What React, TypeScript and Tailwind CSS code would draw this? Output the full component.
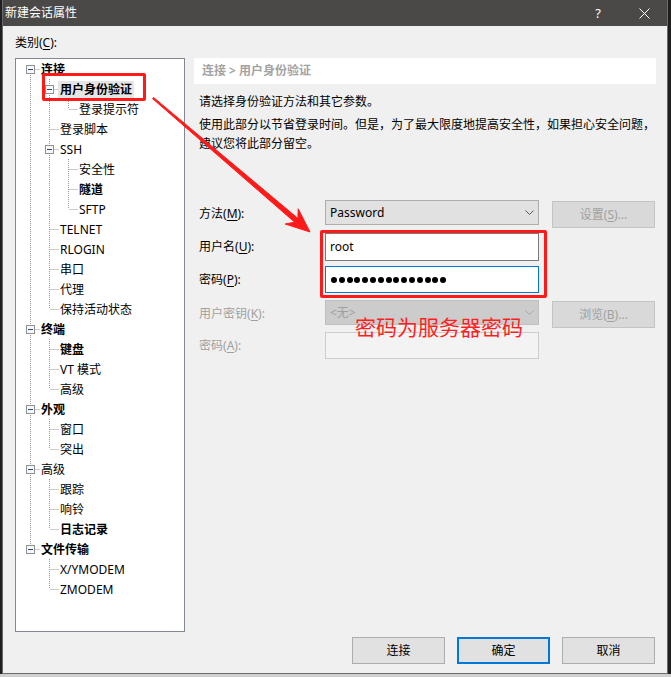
import React from 'react';

type Node = { t: string; l: number; b?: boolean; box?: boolean; sel?: boolean };

const tree: Node[] = [
  { t: '连接', l: 0, b: true, box: true },
  { t: '用户身份验证', l: 1, b: true, box: true, sel: true },
  { t: '登录提示符', l: 2 },
  { t: '登录脚本', l: 1 },
  { t: 'SSH', l: 1, box: true },
  { t: '安全性', l: 2 },
  { t: '隧道', l: 2, b: true },
  { t: 'SFTP', l: 2 },
  { t: 'TELNET', l: 1 },
  { t: 'RLOGIN', l: 1 },
  { t: '串口', l: 1 },
  { t: '代理', l: 1 },
  { t: '保持活动状态', l: 1 },
  { t: '终端', l: 0, b: true, box: true },
  { t: '键盘', l: 1, b: true },
  { t: 'VT 模式', l: 1 },
  { t: '高级', l: 1 },
  { t: '外观', l: 0, b: true, box: true },
  { t: '窗口', l: 1 },
  { t: '突出', l: 1 },
  { t: '高级', l: 0, box: true },
  { t: '跟踪', l: 1 },
  { t: '响铃', l: 1 },
  { t: '日志记录', l: 1, b: true },
  { t: '文件传输', l: 0, b: true, box: true },
  { t: 'X/YMODEM', l: 1 },
  { t: 'ZMODEM', l: 1 },
];

// does the branch at `level` carry on below row i?
function continues(i: number, level: number) {
  for (let j = i + 1; j < tree.length; j++) {
    if (tree[j].l < level) return false;
    if (tree[j].l === level) return true;
  }
  return false;
}

function Guides({ i }: { i: number }) {
  const n = tree[i];
  const w = 19 * (n.l + 1);
  const x = 19 * n.l + 9.5;
  const dots = { stroke: '#999999', strokeWidth: 1, strokeDasharray: '1 1' };
  const lines: React.ReactNode[] = [];
  for (let a = 0; a < n.l; a++) {
    if (continues(i, a)) {
      lines.push(<line key={'a' + a} x1={19 * a + 9.5} y1={0} x2={19 * a + 9.5} y2={20} {...dots} />);
    }
  }
  if (!(i === 0 && n.l === 0)) lines.push(<line key="up" x1={x} y1={0} x2={x} y2={10} {...dots} />);
  if (continues(i, n.l)) lines.push(<line key="dn" x1={x} y1={10} x2={x} y2={20} {...dots} />);
  lines.push(<line key="h" x1={x + 1} y1={10.5} x2={w} y2={10.5} {...dots} />);
  return (
    <svg width={w} height={20} className="shrink-0">
      {lines}
      {n.box && (
        <g>
          <rect x={19 * n.l + 5.5} y={6.5} width={8} height={8} fill="#f7f7f7" stroke="#919191" />
          <line x1={19 * n.l + 7} y1={10.5} x2={19 * n.l + 12} y2={10.5} stroke="#2b4a82" />
        </g>
      )}
    </svg>
  );
}

function Combo({ value, disabled }: { value: string; disabled?: boolean }) {
  return (
    <div
      className={`w-[214px] h-[25px] flex items-center justify-between pl-[4px] pr-[4px] border ${
        disabled ? 'bg-[#cccccc] border-[#bfbfbf] text-[#a0a0a0]' : 'bg-[#e1e1e1] border-[#adadad] text-black'
      }`}
    >
      <span>{value}</span>
      <svg width="9" height="5" viewBox="0 0 9 5" className={disabled ? 'text-[#a8a8a8]' : 'text-[#555555]'}>
        <path d="M0.5 0.5 L4.5 4.5 L8.5 0.5" fill="none" stroke="currentColor" />
      </svg>
    </div>
  );
}

function Label({ text, k, disabled }: { text: string; k: string; disabled?: boolean }) {
  return (
    <div className={`w-[131px] pl-[5px] self-center ${disabled ? 'text-[#a0a0a0]' : 'text-black'}`}>
      {text}(<span className="underline underline-offset-2">{k}</span>):
    </div>
  );
}

function SideButton({ text, k }: { text: string; k: string }) {
  return (
    <div className="ml-[13px] mt-[1px] w-[103px] h-[27px] flex items-center justify-center bg-[#d9d9d9] border border-[#c4c4c4] text-[#a0a0a0]">
      {text}(<span className="underline underline-offset-2">{k}</span>)...
    </div>
  );
}

export default function App() {
  return (
    <div className="relative w-[671px] h-[677px] bg-[#1f1f1f] overflow-hidden text-[12px] leading-[16px] font-['Noto_Sans','Noto_Sans_CJK_SC',sans-serif]">
      <div className="ml-[2px] w-[666px] h-[674px] flex flex-col bg-[#f0f0f0] border-x border-b border-[#6b6b6b]">
        {/* title bar */}
        <div className="h-[26px] flex items-center bg-[#4a4947] text-white">
          <span className="pl-[2px] flex-1">新建会话属性</span>
          <span className="w-[46px] text-center text-[13px]">?</span>
          <span className="w-[46px] flex justify-center">
            <svg width="11" height="11" viewBox="0 0 11 11">
              <path d="M0.5 0.5 L10.5 10.5 M10.5 0.5 L0.5 10.5" stroke="white" strokeWidth="1" />
            </svg>
          </span>
        </div>

        <div className="flex-1 flex flex-col pl-[12px] pr-[11px] pt-[9px]">
          <div className="flex gap-[9px]">
            {/* category tree */}
            <div className="w-[170px] flex flex-col">
              <div className="h-[16px]">
                类别(<span className="underline underline-offset-2">C</span>):
              </div>
              <div className="mt-[7px] h-[574px] bg-white border border-[#828790] pl-[5px]">
                {tree.map((n, i) => (
                  <div key={i} className="h-[20px] flex items-center">
                    <Guides i={i} />
                    <span
                      className={`ml-[-1px] px-[2px] leading-[17px] whitespace-nowrap text-black ${n.b ? 'font-bold' : ''} ${
                        n.sel ? 'bg-[#e5e5e5]' : ''
                      }`}
                    >
                      {n.t}
                    </span>
                  </div>
                ))}
              </div>
            </div>

            {/* settings panel */}
            <div className="w-[462px] mt-[23px] flex flex-col">
              <div className="h-[26px] bg-white pl-[8px] flex items-center font-bold text-[#a3a3a3]">连接 &gt; 用户身份验证</div>
              <p className="mt-[9px] pl-[5px] leading-[17px] whitespace-nowrap">请选择身份验证方法和其它参数。</p>
              <p className="mt-[5px] pl-[5px] leading-[19px] whitespace-nowrap">
                使用此部分以节省登录时间。但是，为了最大限度地提高安全性，如果担心安全问题，
                <br />
                建议您将此部分留空。
              </p>

              <div className="mt-[47px] flex flex-col">
                <div className="h-[28px] flex items-start">
                  <Label text="方法" k="M" />
                  <Combo value="Password" />
                  <SideButton text="设置" k="S" />
                </div>
                <div className="mt-[5px] h-[28px] flex items-start">
                  <Label text="用户名" k="U" />
                  <div className="w-[214px] h-[28px] flex items-center pl-[4px] bg-white border border-[#7a7a7a]">root</div>
                </div>
                <div className="mt-[5px] h-[27px] flex items-start">
                  <Label text="密码" k="P" />
                  <div className="w-[214px] h-[27px] flex items-center gap-[1.8px] pl-[5px] bg-white border border-[#0078d7]">
                    {Array.from({ length: 15 }).map((_, i) => (
                      <span key={i} className="w-[6px] h-[6px] rounded-full bg-black" />
                    ))}
                  </div>
                </div>
                <div className="mt-[7px] h-[28px] flex items-start">
                  <Label text="用户密钥" k="K" disabled />
                  <Combo value="<无>" disabled />
                  <SideButton text="浏览" k="B" />
                </div>
                <div className="mt-[4px] h-[27px] flex items-start">
                  <Label text="密码" k="A" disabled />
                  <div className="w-[214px] h-[27px] bg-[#f3f3f3] border border-[#cccccc]" />
                </div>
              </div>
            </div>
          </div>

          {/* dialog buttons */}
          <div className="mt-[5px] pr-[1px] flex justify-end gap-[12px]">
            <button className="w-[93px] h-[27px] bg-[#e1e1e1] border border-[#adadad]">连接</button>
            <button className="w-[93px] h-[27px] bg-[#e1e1e1] border-2 border-[#0078d7]">确定</button>
            <button className="w-[93px] h-[27px] bg-[#e1e1e1] border border-[#adadad]">取消</button>
          </div>
        </div>
      </div>
      <div className="h-[3px] bg-[#cfcfcf]" />

      {/* red annotations */}
      <div className="absolute left-[42px] top-[73px] w-[104px] h-[28px] border-[3px] border-[#ff1a1a] rounded-[2px] pointer-events-none" />
      <div className="absolute left-[320px] top-[230px] w-[227px] h-[68px] border-[3px] border-[#ff1a1a] rounded-[2px] pointer-events-none" />
      <svg className="absolute left-0 top-0 pointer-events-none" width="671" height="677">
        <polygon
          points="152.5,98.6 294.7,222.2 285.2,224 310,232 298.2,208.8 297.9,218.4 153.5,97.4"
          fill="#ff1a1a"
          stroke="#ff1a1a"
          strokeWidth="1"
          strokeLinejoin="round"
        />
      </svg>
      <div className="absolute left-[355px] top-[317px] text-[21px] leading-[21px] text-[#ff1f1f] whitespace-nowrap">密码为服务器密码</div>
    </div>
  );
}
